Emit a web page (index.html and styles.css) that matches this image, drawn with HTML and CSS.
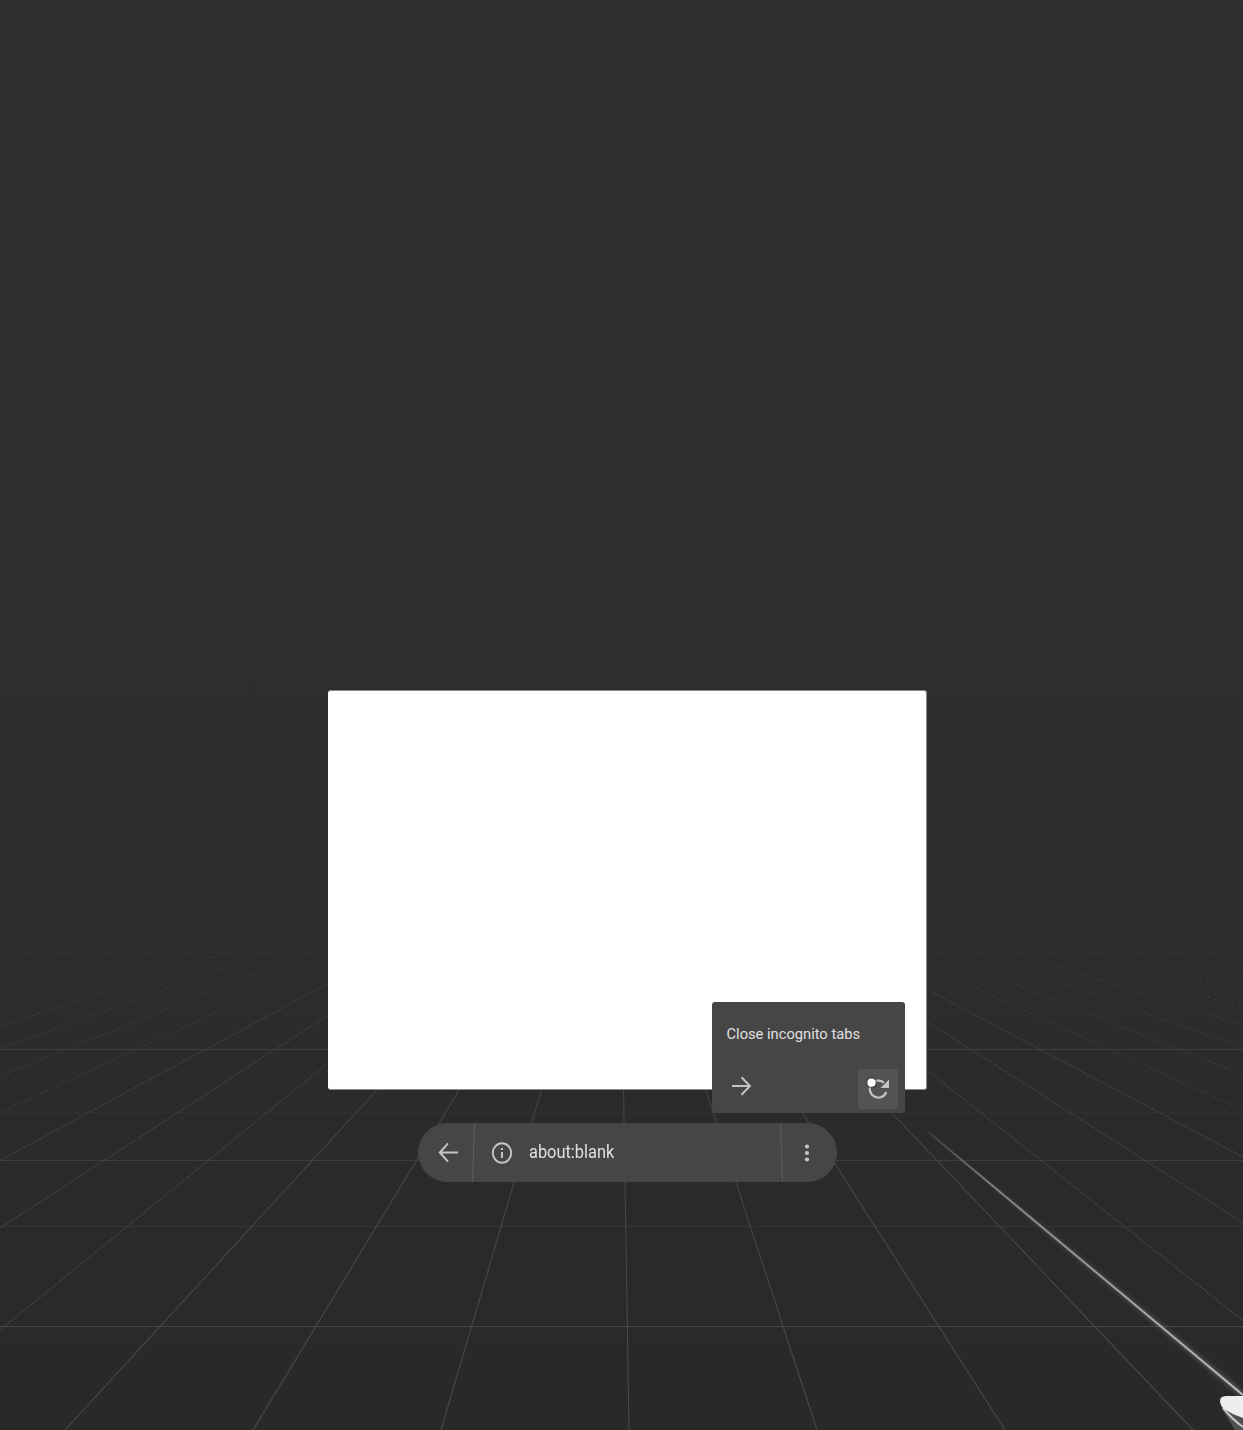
FILE: index.html
```html
<!DOCTYPE html>
<html lang="en">
<head>
<meta charset="utf-8">
<title>about:blank</title>
<link rel="stylesheet" href="styles.css">
</head>
<body>
<svg class="floor" viewBox="0 0 1243 1430" aria-hidden="true">
  <defs>
    <linearGradient id="fade" gradientUnits="userSpaceOnUse" x1="0" y1="920" x2="0" y2="1330">
      <stop offset="0" stop-color="#fff" stop-opacity=".4"/>
      <stop offset=".35" stop-color="#fff" stop-opacity=".8"/>
      <stop offset="1" stop-color="#fff"/>
    </linearGradient>
    <mask id="floorMask" maskUnits="userSpaceOnUse" x="0" y="920" width="1243" height="510">
      <rect x="0" y="928" width="1243" height="502" fill="url(#fade)"/>
    </mask>
    <linearGradient id="beam" gradientUnits="userSpaceOnUse" x1="927" y1="1131" x2="1243" y2="1395">
      <stop offset="0" stop-color="#aaa" stop-opacity=".1"/>
      <stop offset=".2" stop-color="#aaa" stop-opacity=".65"/>
      <stop offset="1" stop-color="#bcbcbc"/>
    </linearGradient>
    <linearGradient id="glow" gradientUnits="userSpaceOnUse" x1="950" y1="1150" x2="1243" y2="1395">
      <stop offset="0" stop-color="#999" stop-opacity="0"/>
      <stop offset="1" stop-color="#999"/>
    </linearGradient>
    <filter id="soft" filterUnits="userSpaceOnUse" x="900" y="1100" width="343" height="330"><feGaussianBlur stdDeviation="2"/></filter>
  </defs>
  <g class="rows">
    <path class="row-dim" d="M0 927.5H1243M0 952.5H1243M0 1112.5H1243"/>
    <path class="row-mid" d="M0 1049.5H1243M0 1160.5H1243"/>
    <path class="row-low" d="M0 1226.5H1243"/>
    <path class="row-near" d="M0 1326.5H1243"/>
  </g>
  <g mask="url(#floorMask)">
    <path class="ray" d="M619.3 826L65 1430M619.3 826L253 1430M619.3 826L441 1430M619.3 826L629 1430M619.3 826L817 1430M619.3 826L1005 1430M619.3 826L1193 1430"/>
    <path class="ray ray-fine" d="M619.3 826L-123 1430M619.3 826L-311 1430M619.3 826L-499 1430M619.3 826L1381 1430M619.3 826L1569 1430M619.3 826L1757 1430"/>
    <path class="ray ray-dots" d="M619.3 826L-687 1430M619.3 826L-875 1430M619.3 826L-1063 1430M619.3 826L-1251 1430M619.3 826L1945 1430M619.3 826L2133 1430M619.3 826L2321 1430M619.3 826L2509 1430"/>
    <path class="ray ray-far" d="M619.3 826L-1439 1430M619.3 826L-1627 1430M619.3 826L-1815 1430M619.3 826L-2003 1430M619.3 826L-2191 1430M619.3 826L-2379 1430M619.3 826L2697 1430M619.3 826L2885 1430M619.3 826L3073 1430M619.3 826L3261 1430M619.3 826L3449 1430M619.3 826L3637 1430"/>
  </g>
  <path class="beam-glow" d="M950 1150.200L1243 1395" filter="url(#soft)"/>
  <path class="beam" d="M927 1131L1243 1395"/>
  <path fill="#505050" d="M1221 1407L1235 1430H1243V1415Z"/>
  <path fill="none" stroke="#c4c4c4" stroke-width="2" d="M1223 1408Q1232 1419 1243 1427"/>
  <path fill="#eee" d="M1243 1396H1227Q1220 1396 1220 1400.500Q1220 1406 1225 1409.500Q1233 1415 1243 1418Z"/>
</svg>

<main class="scene">
  <section class="window">
    <div class="menu">
      <div class="menu-item">Close incognito tabs</div>
      <div class="menu-actions">
        <svg class="forward" width="22" height="22" viewBox="0 0 22 22"><path d="M1 11H19M10.500 2.300L19 11L10.500 19.700"/></svg>
        <div class="reload">
          <svg width="40" height="40" viewBox="0 0 40 40">
            <path class="arc" d="M28.300 23A8.500 8.500 0 1 1 26 13.700"/>
            <path fill="#c4c4c4" d="M31 10.500V19H22.500Z"/>
            <circle cx="13.500" cy="13.700" r="5.800" fill="#333" opacity=".45"/>
            <circle cx="13.500" cy="13.700" r="4.100" fill="#fff"/>
          </svg>
        </div>
      </div>
    </div>
  </section>

  <nav class="toolbar">
    <svg class="back" width="22" height="22" viewBox="0 0 22 22"><path d="M21 10.500H3M11 1.300L2.800 10.500L11 19.700"/></svg>
    <svg class="divider" width="3" height="59" viewBox="0 0 3 59"><path d="M2.500 0L.5 59"/></svg>
    <svg class="info" width="22" height="24" viewBox="0 0 22 24"><ellipse cx="11" cy="12" rx="9.200" ry="9.800"/><path d="M11 11V17M11 7V9"/></svg>
    <span class="url">about:blank</span>
    <svg class="divider" width="3" height="59" viewBox="0 0 3 59"><path d="M.5 0L2.500 59"/></svg>
    <svg class="more" width="6" height="18" viewBox="0 0 6 18"><circle cx="3" cy="2.500" r="2.100"/><circle cx="3" cy="9" r="2.100"/><circle cx="3" cy="15.500" r="2.100"/></svg>
  </nav>
</main>
</body>
</html>
```
FILE: styles.css
```css
* { box-sizing: border-box; }
body {
  margin: 0;
  height: 1430px;
  overflow: hidden;
  position: relative;
  background: linear-gradient(#2f2f2f 0, #2e2e2e 900px, #2b2b2b 1060px, #292929 1430px);
  font-family: Roboto, sans-serif;
}
svg { display: block; flex: none; }
.floor { position: absolute; left: 0; top: 0; width: 1243px; height: 1430px; }
.rows path { fill: none; stroke-width: 1; }
.row-dim { stroke: #303030; }
.row-mid { stroke: #3d3d3d; }
.row-low { stroke: #353535; }
.row-near { stroke: #464646; }
.ray { fill: none; stroke: #494949; stroke-width: 1.1; }
.ray-fine { stroke: #505050; stroke-width: 1; stroke-dasharray: 2 1; }
.ray-dots { stroke: #545454; stroke-width: .9; stroke-dasharray: 1.3 2.200; }
.ray-far { stroke: #5c5c5c; stroke-width: .9; stroke-dasharray: 1.200 5; }
.beam { fill: none; stroke: url(#beam); stroke-width: 2; }
.beam-glow { fill: none; stroke: url(#glow); stroke-width: 4; opacity: .55; }

.scene { position: relative; padding: 690px 0 0 328px; }
.window {
  position: relative;
  width: 599px;
  height: 400px;
  background: #fff;
  border: solid #8b8b8b;
  border-width: 1px 1px 1px 0;
  border-radius: 3px;
}
.menu {
  position: absolute;
  left: 384px;
  top: 311px;
  width: 193px;
  height: 111px;
  padding: 22px 7px 4px 14.5px;
  display: flex;
  flex-direction: column;
  justify-content: space-between;
  background: #464646;
  border-radius: 3px;
}
.menu-item { font-size: 14.7px; line-height: 20px; color: #e0e0e0; white-space: nowrap; }
.menu-actions { display: flex; justify-content: space-between; }
.forward { margin: 6px 0 0 4px; }
.forward path, .back path { fill: none; stroke: #c4c4c4; stroke-width: 2; }
.reload { width: 40px; height: 40px; border-radius: 3px; background: #535353; }
.arc { fill: none; stroke: #c4c4c4; stroke-width: 2.2; }
.toolbar {
  display: flex;
  align-items: center;
  width: 419px;
  height: 59px;
  margin: 33px 0 0 90px;
  padding: 0 27px 0 19px;
  background: #464646;
  border-radius: 29.5px;
}
.divider { margin-left: 13px; }
.divider path { stroke: #5d5d5d; stroke-width: 1; }
.info { margin-left: 16px; fill: none; stroke: #c4c4c4; stroke-width: 2; }
.url {
  flex: 1;
  margin-left: 16px;
  padding-bottom: 1px;
  font-size: 18px;
  line-height: 24px;
  color: #e0e0e0;
  transform: scaleX(.91);
  transform-origin: 0 50%;
}
.more { margin-left: 21px; fill: #c4c4c4; }
```
